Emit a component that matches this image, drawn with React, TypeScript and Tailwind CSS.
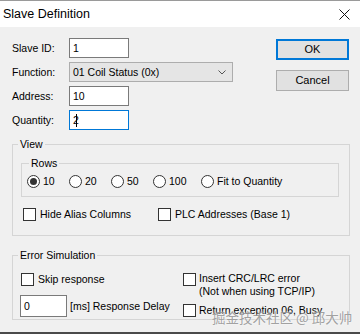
import React from 'react';

function Radio({ checked, label, width }: { checked?: boolean; label: string; width?: string }) {
  return (
    <div className={`flex items-center h-[16px] gap-[3px] ${width ?? ''}`}>
      <span className="w-[13px] h-[13px] rounded-full border border-[#333333] bg-white flex items-center justify-center shrink-0">
        {checked && <span className="w-[7px] h-[7px] rounded-full bg-[#333333]" />}
      </span>
      <span>{label}</span>
    </div>
  );
}

function Check({ label, width }: { label: string; width?: string }) {
  return (
    <div className={`flex items-center h-[16px] gap-[4px] ${width ?? ''}`}>
      <span className="w-[13px] h-[13px] border border-[#333333] bg-white shrink-0" />
      <span>{label}</span>
    </div>
  );
}

export default function App() {
  return (
    <div className="relative w-[360px] h-[334px] overflow-hidden bg-[#f0f0f0] flex flex-col border-t border-[#9a9a9a] font-['Liberation_Sans',Arial,sans-serif] text-[10.5px] leading-[13px] text-black">
      {/* Title bar */}
      <div className="h-[26px] bg-white flex items-center justify-between pl-[3px] pr-[10px] shrink-0">
        <span className="text-[12.5px] leading-[16px]">Slave Definition</span>
        <svg width="11" height="11" viewBox="0 0 11 11" className="mt-[1px]">
          <path d="M0.5 0.5 L10.5 10.5 M10.5 0.5 L0.5 10.5" stroke="#111" strokeWidth="1" fill="none" />
        </svg>
      </div>

      <div className="pl-[12px] flex flex-col">
        {/* Top fields + buttons */}
        <div className="flex pt-[11px] pr-[11px]">
          <div className="flex flex-col gap-[4px]">
            <div className="flex items-center h-[20px]">
              <span className="w-[57px]">Slave ID:</span>
              <div className="w-[60px] h-[20px] bg-white border border-[#7a7a7a] pl-[3px] flex items-center">1</div>
            </div>
            <div className="flex items-center h-[20px]">
              <span className="w-[57px]">Function:</span>
              <div className="w-[164px] h-[20px] bg-[#e5e5e5] border border-[#adadad] pl-[3px] pr-[6px] flex items-center justify-between">
                <span>01 Coil Status (0x)</span>
                <svg width="8" height="5" viewBox="0 0 8 5">
                  <path d="M0.5 0.5 L4 4 L7.5 0.5" stroke="#555" strokeWidth="1" fill="none" />
                </svg>
              </div>
            </div>
            <div className="flex items-center h-[20px]">
              <span className="w-[57px]">Address:</span>
              <div className="w-[60px] h-[20px] bg-white border border-[#7a7a7a] pl-[3px] flex items-center">10</div>
            </div>
            <div className="flex items-center h-[20px]">
              <span className="w-[57px]">Quantity:</span>
              <div className="w-[60px] h-[20px] bg-white border border-[#0078d7] pl-[3px] flex items-center">
                <span>2</span>
                <span className="w-[1px] h-[13px] bg-black -ml-[3px]" />
              </div>
            </div>
          </div>

          <div className="ml-auto flex flex-col gap-[10px] pt-[1px]">
            <button className="w-[73px] h-[21px] bg-[#e1e1e1] border-2 border-[#0078d7] flex items-center justify-center text-[11px]">
              OK
            </button>
            <button className="w-[73px] h-[21px] bg-[#e1e1e1] border border-[#adadad] flex items-center justify-center text-[11px]">
              Cancel
            </button>
          </div>
        </div>

        {/* View group */}
        <fieldset className="mt-[8px] w-[338px] border border-[#d5d5d5] pl-[8px] pb-[13px]">
          <legend className="-ml-[3px] px-[2px] leading-[13px]">View</legend>
          <fieldset className="mt-[6px] w-[318px] border border-[#d5d5d5] pl-[5px] pt-[3px] pb-[7px]">
            <legend className="ml-[2px] px-[2px] leading-[13px]">Rows</legend>
            <div className="flex items-center">
              <Radio checked label="10" width="w-[42px]" />
              <Radio label="20" width="w-[42px]" />
              <Radio label="50" width="w-[42px]" />
              <Radio label="100" width="w-[48px]" />
              <Radio label="Fit to Quantity" />
            </div>
          </fieldset>
          <div className="flex items-center mt-[9px] ml-[2px]">
            <Check label="Hide Alias Columns" width="w-[135px]" />
            <Check label="PLC Addresses (Base 1)" />
          </div>
        </fieldset>

        {/* Error Simulation group */}
        <fieldset className="mt-[13px] w-[338px] border border-[#d5d5d5] pl-[8px] pb-[2px]">
          <legend className="-ml-[3px] px-[2px] leading-[13px]">Error Simulation</legend>
          <div className="flex">
            <div className="w-[162px] flex flex-col">
              <div className="mt-[9px]">
                <Check label="Skip response" />
              </div>
              <div className="mt-[8px] -ml-[1px] flex items-center gap-[3px]">
                <div className="w-[47px] h-[22px] bg-white border border-[#7a7a7a] pl-[3px] flex items-center">0</div>
                <span>[ms] Response Delay</span>
              </div>
            </div>
            <div className="flex flex-col mt-[10px]">
              <div className="flex gap-[3px]">
                <span className="w-[13px] h-[13px] mt-[1px] border border-[#333333] bg-white shrink-0" />
                <span>
                  Insert CRC/LRC error
                  <br />
                  (Not when using TCP/IP)
                </span>
              </div>
              <div className="flex items-center gap-[3px] mt-[6px]">
                <span className="w-[13px] h-[13px] border border-[#333333] bg-white shrink-0" />
                <span>Return exception 06, Busy</span>
              </div>
            </div>
          </div>
        </fieldset>
      </div>

      <div className="mt-auto h-[2px] bg-[#4a4a4a] shrink-0" />

      {/* Watermark */}
      <div className="absolute left-[212px] top-[308px] text-[13.5px] leading-[17px] text-[#8a8a8a]/80 font-['Noto_Sans_CJK_SC','Noto_Sans',sans-serif] [text-shadow:0_0_2px_#ffffff] whitespace-nowrap pointer-events-none">
        掘金技术社区 @ 邱大帅
      </div>
    </div>
  );
}
